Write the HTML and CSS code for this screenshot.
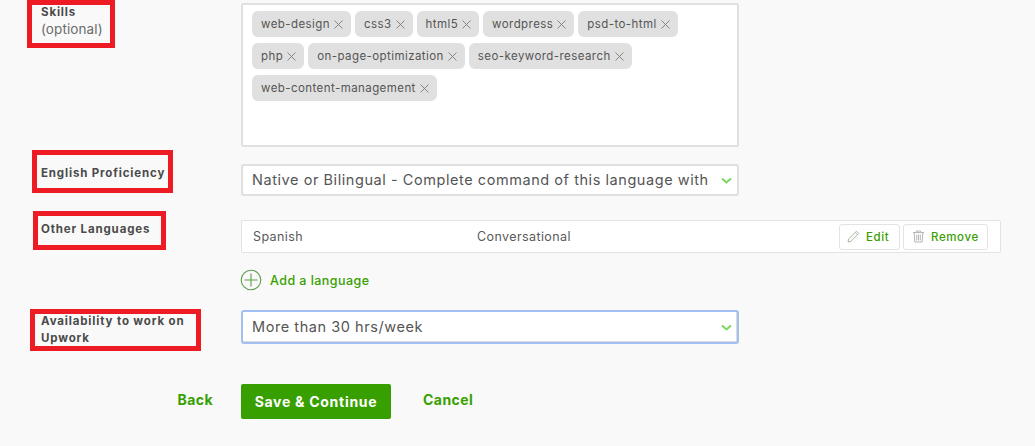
FILE: index.html
```html
<!DOCTYPE html>
<html lang="en">
<head>
<meta charset="utf-8">
<title>Profile</title>
<link rel="stylesheet" href="styles.css">
</head>
<body>
<main class="form">
  <section class="row row-skills">
    <div class="mark mark-skills"><strong>Skills</strong><span class="opt">(optional)</span></div>
    <div class="tagbox">
      <div class="tag-row">
        <span class="tag">web-design<svg class="x" viewBox="0 0 9 9"><path d="M.5.5l8 8M8.500.5l-8 8"/></svg></span>
        <span class="tag">css3<svg class="x" viewBox="0 0 9 9"><path d="M.5.5l8 8M8.500.5l-8 8"/></svg></span>
        <span class="tag">html5<svg class="x" viewBox="0 0 9 9"><path d="M.5.5l8 8M8.500.5l-8 8"/></svg></span>
        <span class="tag">wordpress<svg class="x" viewBox="0 0 9 9"><path d="M.5.5l8 8M8.500.5l-8 8"/></svg></span>
        <span class="tag">psd-to-html<svg class="x" viewBox="0 0 9 9"><path d="M.5.5l8 8M8.500.5l-8 8"/></svg></span>
      </div>
      <div class="tag-row">
        <span class="tag">php<svg class="x" viewBox="0 0 9 9"><path d="M.5.5l8 8M8.500.5l-8 8"/></svg></span>
        <span class="tag">on-page-optimization<svg class="x" viewBox="0 0 9 9"><path d="M.5.5l8 8M8.500.5l-8 8"/></svg></span>
        <span class="tag">seo-keyword-research<svg class="x" viewBox="0 0 9 9"><path d="M.5.5l8 8M8.500.5l-8 8"/></svg></span>
      </div>
      <div class="tag-row">
        <span class="tag">web-content-management<svg class="x" viewBox="0 0 9 9"><path d="M.5.5l8 8M8.500.5l-8 8"/></svg></span>
      </div>
    </div>
  </section>

  <section class="row row-english">
    <div class="mark mark-english"><strong>English Proficiency</strong></div>
    <div class="select select-english">
      <span class="select-text">Native or Bilingual - Complete command of this language with</span>
      <svg class="chev" viewBox="0 0 11 7"><path d="M1 1.500l4.500 4 4.500-4"/></svg>
    </div>
  </section>

  <section class="row row-other">
    <div class="mark mark-other"><strong>Other Languages</strong></div>
    <div class="other-col">
      <div class="lang">
        <span class="lang-name">Spanish</span>
        <span class="lang-level">Conversational</span>
        <button class="mini mini-edit">
          <svg class="mini-ico" viewBox="0 0 13 13"><path d="M1 12l.8-3.200L9.500 1.200l2.300 2.300-7.700 7.700zM8.300 2.400l2.300 2.300"/></svg>Edit
        </button>
        <button class="mini mini-remove">
          <svg class="mini-ico" viewBox="0 0 13 13"><path d="M1 2.500h11M4.500 2.500V1h4v1.500M2.200 2.500l.6 9.500h7.400l.6-9.500M4.700 4.500v6M6.500 4.500v6M8.300 4.500v6"/></svg>Remove
        </button>
      </div>
      <a class="add" href="#">
        <svg class="add-ico" viewBox="0 0 22 22"><circle cx="11" cy="11" r="9.800"/><path d="M11 4.500v13M4.500 11h13"/></svg>Add a language
      </a>
    </div>
  </section>

  <section class="row row-avail">
    <div class="mark mark-avail"><strong>Availability to work on Upwork</strong></div>
    <div class="select select-avail">
      <span class="select-text">More than 30 hrs/week</span>
      <svg class="chev" viewBox="0 0 11 7"><path d="M1 1.500l4.500 4 4.500-4"/></svg>
    </div>
  </section>

  <section class="actions">
    <a class="link link-back" href="#">Back</a>
    <button class="save">Save &amp; Continue</button>
    <a class="link link-cancel" href="#">Cancel</a>
  </section>
</main>
</body>
</html>
```

FILE: styles.css
```css
* { box-sizing: border-box; }
html, body { margin: 0; height: 446px; overflow: hidden; }
body {
  background: #f9f9f9;
  color: #4a4a4a;
  font-family: Inter, "Liberation Sans", sans-serif;
  font-size: 12px;
}
.form { display: flex; flex-direction: column; }
.row { display: grid; grid-template-columns: 241px 1fr; align-items: start; }

.mark {
  border: 5px solid #ed1c24;
  line-height: 17px;
  font-size: 11.500px;
}
.mark strong { display: block; font-weight: 700; letter-spacing: .85px; color: #4a4a4a; }
.opt { display: block; color: #6b6b6b; font-size: 13.500px; letter-spacing: .1px; }

.row-skills { height: 150px; }
.mark-skills { width: 88px; height: 48px; margin-left: 27px; padding: 0 0 0 9px; }
.mark-skills strong { margin-top: -1px; }
.tagbox {
  width: 498px; height: 144px; margin-top: 3px;
  background: #fff; border: 2px solid #e0e0e0; border-radius: 2px;
  padding: 6px 9px;
  display: flex; flex-direction: column; gap: 6px;
}
.tag-row { display: flex; gap: 4px; }
.tag {
  display: inline-flex; align-items: center; height: 26px; padding: 0 8px 0 9px;
  background: #e0e0e0; border-radius: 6px;
  font-size: 11.500px; letter-spacing: .43px; color: #555;
}
.x { width: 9px; height: 9px; margin-left: 4px; fill: none; stroke: #7b7b7b; stroke-width: .9; }

.row-english { height: 61px; }
.mark-english { width: 141px; height: 43px; margin-left: 32px; padding: 10px 0 0 4px; white-space: nowrap; }
.select {
  width: 498px; display: flex; align-items: center; justify-content: space-between;
  background: #fff; border: 2px solid #e0e0e0; border-radius: 3px;
  padding: 0 5px 2px 9px; font-size: 14.500px; letter-spacing: .56px; color: #555;
}
.select-english { height: 32px; margin-top: 14px; }
.select-text { width: 457px; white-space: nowrap; }
.chev { width: 11px; height: 7px; margin-top: 2px; fill: none; stroke: #7ed560; stroke-width: 2; }

.row-other { height: 98px; }
.mark-other { width: 133px; height: 39px; margin-left: 33px; padding: 5px 0 0 3px; white-space: nowrap; }
.other-col { margin-top: 9px; }
.lang {
  width: 760px; height: 33px; display: flex; align-items: center;
  background: #fff; border: 1px solid #e3e3e3; border-radius: 2px;
  padding: 0 12px 0 11px; font-size: 12.500px; letter-spacing: .4px; color: #5a5a5a;
}
.lang-name { width: 224px; }
.lang-level { flex: 1; }
.mini {
  height: 26px; display: inline-flex; align-items: center;
  background: #fff; border: 1px solid #e3e3e3; border-radius: 3px;
  font: 500 11.500px Inter, "Liberation Sans", sans-serif; letter-spacing: .6px; color: #37a000;
}
.mini-edit { width: 61px; padding: 0 0 0 7px; margin-right: 3px; }
.mini-remove { width: 85px; padding: 0 0 0 8px; }
.mini-ico { width: 13px; height: 13px; margin-right: 6px; fill: none; stroke: #a9b99f; stroke-width: 1; }
.mini-remove .mini-ico { stroke: #b5b5b5; margin-right: 6px; }
.add {
  display: flex; align-items: center; margin-top: 16px;
  color: #37a000; font-size: 12.500px; font-weight: 500; letter-spacing: .45px; text-decoration: none;
}
.add-ico { width: 22px; height: 22px; margin: 0 8px 0 -1px; fill: none; stroke: #5a9e4b; stroke-width: 1.100; }

.row-avail { height: 75px; }
.mark-avail { width: 171px; height: 42px; margin-left: 30px; padding: 0 0 0 6px; }
.mark-avail strong { margin-top: -1px; }
.select-avail { height: 34px; margin-top: 1px; border-color: #a3bff2; box-shadow: inset 0 -1px #dcdcdc, inset -1px 0 #dcdcdc; }

.actions { display: grid; grid-template-columns: 241px auto 1fr; align-items: center; }
.link { color: #37a000; font-size: 14px; font-weight: 700; letter-spacing: .45px; text-decoration: none; }
.link-back { justify-self: end; margin-right: 28px; margin-top: -5px; }
.link-cancel { margin-left: 32px; margin-top: -5px; }
.save {
  width: 150px; height: 35px; background: #37a000; border: 0; border-radius: 2px;
  color: #fff; font: 700 14px Inter, "Liberation Sans", sans-serif; letter-spacing: .72px;
}
```
